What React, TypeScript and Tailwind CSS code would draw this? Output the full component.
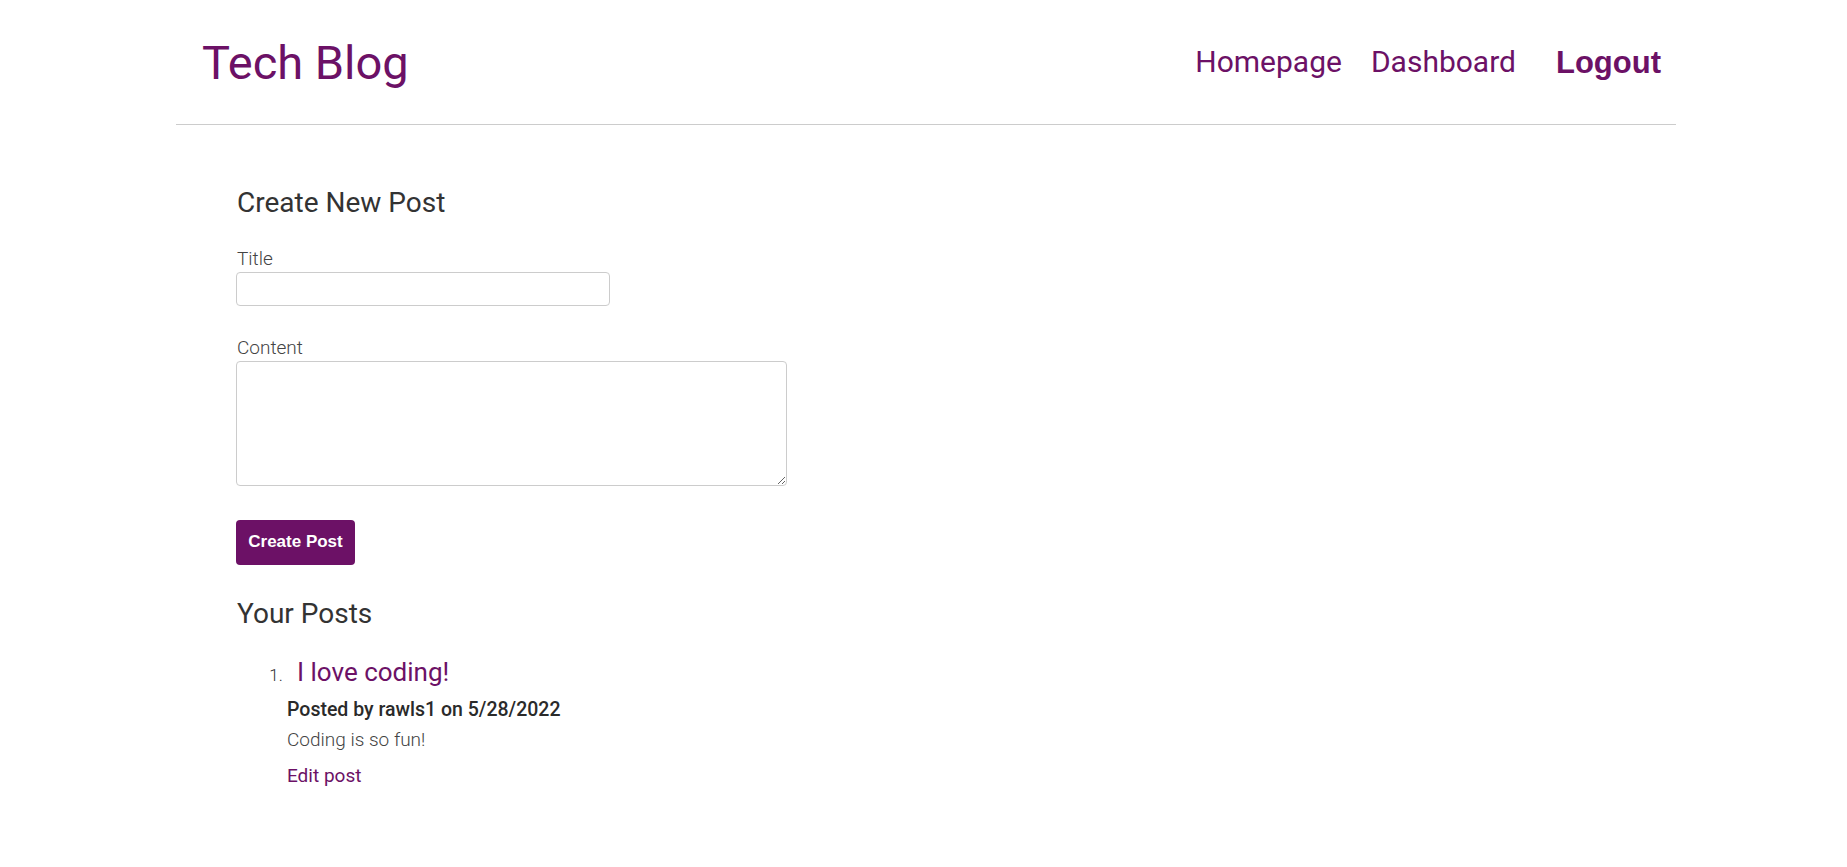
const post = {
  title: "I love coding!",
  author: "rawls1",
  date: "5/28/2022",
  body: "Coding is so fun!",
};

export default function App() {
  return (
    <div className="min-h-screen bg-white font-['Roboto',sans-serif] text-[#333]">
      <header className="ml-[176px] flex h-[125px] w-[1500px] items-center justify-between border-b border-[#cccccc] pl-[26px] pr-[15px]">
        <h1 className="text-[47px] leading-none text-[#6c1166]">Tech Blog</h1>
        <nav className="flex items-center text-[30px] leading-none text-[#6c1166]">
          <a href="#" className="mr-[29px]">Homepage</a>
          <a href="#" className="mr-[40px]">Dashboard</a>
          <button className="font-['Liberation_Sans',sans-serif] text-[31px] font-bold">Logout</button>
        </nav>
      </header>

      <main className="ml-[237px] pt-[60px]">
        <section className="flex flex-col">
          <h2 className="text-[28px] leading-tight">Create New Post</h2>
          <form className="mt-[27px] flex flex-col">
            <label className="text-[19px] font-light leading-tight text-[#444]">Title</label>
            <input
              type="text"
              className="-ml-px mt-[1px] h-[34px] w-[374px] rounded border border-[#cccccc]"
            />
            <label className="mt-[30px] text-[19px] font-light leading-tight text-[#444]">Content</label>
            <textarea className="-ml-px mt-[1px] h-[125px] w-[551px] rounded border border-[#cccccc]" />
            <button
              type="submit"
              className="-ml-px mt-[34px] h-[45px] w-[119px] rounded bg-[#6c1166] font-['Liberation_Sans',sans-serif] text-[17px] font-bold text-white"
            >
              Create Post
            </button>
          </form>
        </section>

        <section className="mt-[31px]">
          <h2 className="text-[28px] leading-tight">Your Posts</h2>
          <ol className="mt-[25px] ml-[50px] list-decimal marker:text-[17px] marker:font-light">
            <li>
              <a href="#" className="ml-[10px] text-[26px] leading-tight text-[#6c1166]">{post.title}</a>
              <p className="mt-[10px] text-[19.5px] font-medium leading-tight text-[#2a2a2a]">
                Posted by {post.author} on {post.date}
              </p>
              <p className="mt-[6px] text-[19px] font-light leading-tight text-[#444]">{post.body}</p>
              <a href="#" className="mt-[12px] block text-[19px] leading-tight text-[#6c1166]">
                Edit post
              </a>
            </li>
          </ol>
        </section>
      </main>
    </div>
  );
}
